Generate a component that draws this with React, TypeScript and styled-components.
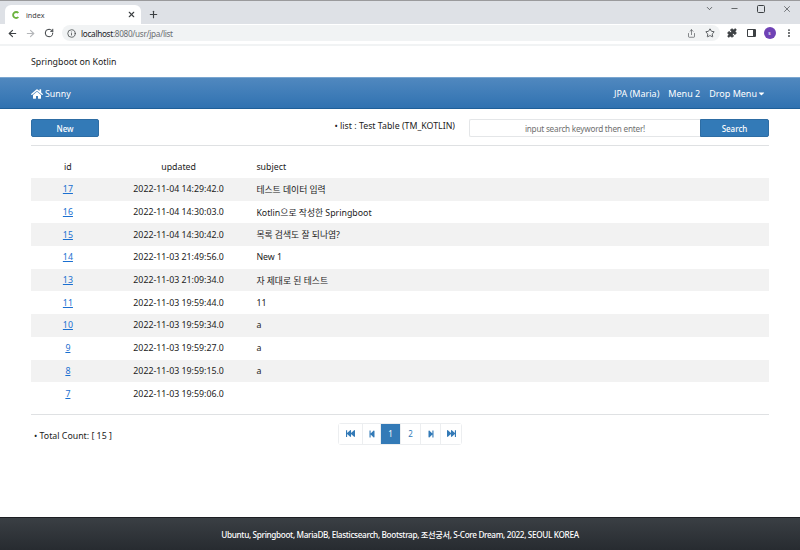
import React from 'react';
import styled, { createGlobalStyle } from 'styled-components';
import { FaHome, FaCaretDown, FaFastBackward, FaStepBackward, FaStepForward, FaFastForward } from 'react-icons/fa';
import { ArrowLeft, ArrowRight, RotateCw, Info, Share, Star, Puzzle, X, Plus, ChevronDown, Minus, EllipsisVertical } from 'lucide-react';

interface IRow {
    id: number;
    updated: string;
    subject: string;
}

const rows: IRow[] = [
    { id: 17, updated: '2022-11-04 14:29:42.0', subject: '테스트 데이터 입력' },
    { id: 16, updated: '2022-11-04 14:30:03.0', subject: 'Kotlin으로 작성한 Springboot' },
    { id: 15, updated: '2022-11-04 14:30:42.0', subject: '목록 검색도 잘 되나염?' },
    { id: 14, updated: '2022-11-03 21:49:56.0', subject: 'New 1' },
    { id: 13, updated: '2022-11-03 21:09:34.0', subject: '자 제대로 된 테스트' },
    { id: 11, updated: '2022-11-03 19:59:44.0', subject: '11' },
    { id: 10, updated: '2022-11-03 19:59:34.0', subject: 'a' },
    { id: 9, updated: '2022-11-03 19:59:27.0', subject: 'a' },
    { id: 8, updated: '2022-11-03 19:59:15.0', subject: 'a' },
    { id: 7, updated: '2022-11-03 19:59:06.0', subject: '' },
];

const GlobalStyle = createGlobalStyle`
    html, body {
        margin: 0;
        padding: 0;
        background: #fff;
    }
    * {
        box-sizing: border-box;
    }
`;

const Page = styled.div`
    width: 800px;
    height: 550px;
    overflow: hidden;
    display: flex;
    flex-direction: column;
    font-family: "Noto Sans", "Noto Sans CJK KR", sans-serif;
    font-size: 8.8px;
    color: #222;
`;

const TabStrip = styled.div`
    height: 24px;
    flex: none;
    display: flex;
    align-items: flex-end;
    background: #dee1e6;
    border-top: 1px solid #9a9a9c;
    padding-left: 5px;
`;

const Tab = styled.div`
    width: 136px;
    height: 19px;
    background: #fff;
    border-radius: 6px 6px 0 0;
    display: flex;
    align-items: center;
    padding: 0 5px 0 7px;
    font-size: 7.2px;
    color: #3c4043;
`;

const TabTitle = styled.span`
    margin-left: 6px;
    flex: 1;
`;

const NewTab = styled.div`
    width: 24px;
    height: 19px;
    display: flex;
    align-items: center;
    justify-content: center;
    color: #3c4043;
`;

const WindowControls = styled.div`
    margin-left: auto;
    align-self: flex-start;
    display: flex;
    align-items: center;
    height: 15px;
    padding-right: 8px;
    gap: 16.5px;
    color: #3c4043;
`;

const MaxBox = styled.div`
    width: 8px;
    height: 8px;
    border: 1px solid #3c4043;
    border-radius: 1.5px;
    margin: 0 1px;
`;

const ChromeBar = styled.div`
    height: 22px;
    flex: none;
    display: flex;
    align-items: center;
    padding: 0 6px 2px 3px;
    background: #fff;
    border-bottom: 2px solid #f1f3f4;
    color: #5f6368;
`;

const NavIcon = styled.div<{ $dim?: boolean }>`
    width: 18.5px;
    display: flex;
    justify-content: center;
    color: ${(p) => (p.$dim ? '#b4b6b9' : '#3c4043')};
`;

const Omnibox = styled.div`
    margin-left: 3.5px;
    width: 658px;
    height: 16px;
    border-radius: 8px;
    background: #f1f3f4;
    display: flex;
    align-items: center;
    padding: 0 5px;
    font-size: 8.2px;
    letter-spacing: -0.3px;
    color: #6b6e72;
`;

const Host = styled.span`
    color: #202124;
`;

const Url = styled.span`
    margin-left: 5px;
    flex: 1;
`;

const OmniIcons = styled.div`
    display: flex;
    align-items: center;
    gap: 9.5px;
    color: #3c4043;
`;

const ExtIcons = styled.div`
    display: flex;
    align-items: center;
    margin-left: 7px;
    gap: 8px;
    color: #3c4043;
`;

const SidePanel = styled.div`
    width: 9px;
    height: 8px;
    margin-left: 1.5px;
    border: 1px solid #3c4043;
    border-right-width: 3px;
    border-radius: 1px;
`;

const Avatar = styled.div`
    width: 12px;
    height: 12px;
    border-radius: 50%;
    background: #6f42b5;
    color: #fff;
    font-size: 5px;
    display: flex;
    align-items: center;
    justify-content: center;
`;

const Brand = styled.div`
    height: 31px;
    flex: none;
    padding: 8px 31px 0;
    line-height: 16px;
    color: #222;
`;

const NavBar = styled.nav`
    height: 32px;
    flex: none;
    display: flex;
    align-items: center;
    justify-content: space-between;
    padding: 0 31px;
    color: #fff;
    font-size: 9px;
    background: linear-gradient(to bottom, #5088bf 0%, #3072b1 100%);
    border-top: 1px solid #7aa6d0;
    border-bottom: 1px solid #1f5f98;
`;

const NavHome = styled.div`
    display: flex;
    align-items: center;
    gap: 2px;
    padding-top: 1px;
    font-size: 8.8px;
`;

const NavMenu = styled.div`
    display: flex;
    align-items: center;
    gap: 9px;
    padding-right: 3px;
`;

const NavDrop = styled.span`
    display: inline-flex;
    align-items: center;
`;

const Content = styled.main`
    padding: 10px 31px 0;
    flex: none;
`;

const Toolbar = styled.div`
    display: flex;
    align-items: center;
    height: 18px;
`;

const PrimaryButton = styled.button<{ $width: number }>`
    width: ${(p) => p.$width}px;
    height: 18px;
    padding: 0;
    background: #337ab7;
    color: #fff;
    border: 1px solid #2e6da4;
    font-family: inherit;
    font-size: 8px;
    font-weight: 500;
    border-radius: 2px;
`;

const ListTitle = styled.div`
    margin-left: auto;
    margin-right: 14px;
    position: relative;
    top: -2px;
`;

const SearchGroup = styled.div`
    display: flex;
    width: 300px;
`;

const SearchInput = styled.input`
    width: 231px;
    height: 18px;
    border: 1px solid #e4e6e8;
    border-right: none;
    border-radius: 2px 0 0 2px;
    padding: 0 6px;
    text-align: center;
    font-family: inherit;
    font-size: 8.2px;
    letter-spacing: -0.22px;
    &::placeholder {
        color: #6f6f6f;
        opacity: 1;
    }
`;

const SearchButton = styled(PrimaryButton)`
    border-radius: 0 2px 2px 0;
`;

const Rule = styled.hr<{ $top: number }>`
    margin: ${(p) => p.$top}px 0 0;
    border: none;
    border-top: 1px solid #dfe1e3;
    height: 0;
`;

const Table = styled.table`
    width: 100%;
    margin-top: 9px;
    border-collapse: collapse;
    table-layout: fixed;
`;

const HeadCell = styled.th<{ $width?: string; $left?: boolean }>`
    width: ${(p) => p.$width || 'auto'};
    height: 23px;
    padding: 0 4px;
    font-weight: 400;
    font-size: 8.8px;
    text-align: ${(p) => (p.$left ? 'left' : 'center')};
`;

const Row = styled.tr`
    height: 22.7px;
    &:nth-child(odd) {
        background: #f2f2f2;
    }
`;

const Cell = styled.td<{ $left?: boolean }>`
    padding: 0 4px;
    font-size: 8.8px;
    text-align: ${(p) => (p.$left ? 'left' : 'center')};
`;

const IdLink = styled.a`
    color: #1a6fd0;
    text-decoration: underline;
`;

const Bottom = styled.div`
    display: grid;
    grid-template-columns: 1fr auto 1fr;
    align-items: center;
    margin-top: 8px;
`;

const TotalCount = styled.div`
    padding: 4px 0 0 3px;
`;

const Pager = styled.div`
    display: flex;
    height: 22px;
    border: 1px solid #eceef0;
    border-radius: 3px;
`;

const PageCell = styled.div<{ $active?: boolean; $width: number }>`
    width: ${(p) => p.$width}px;
    display: flex;
    align-items: center;
    justify-content: center;
    font-size: 8px;
    color: ${(p) => (p.$active ? '#fff' : '#337ab7')};
    background: ${(p) => (p.$active ? '#337ab7' : '#fff')};
    border-left: 1px solid #eceef0;
    &:first-child {
        border-left: none;
    }
`;

const Footer = styled.footer`
    margin-top: auto;
    height: 33px;
    flex: none;
    display: flex;
    align-items: center;
    justify-content: center;
    color: #fff;
    font-size: 8.2px;
    letter-spacing: -0.34px;
    font-weight: 500;
    background: linear-gradient(to bottom, #3a3f44 0%, #272b30 100%);
    border-top: 1px solid #1c1e22;
`;

const SpringIcon = () => (
    <svg width="8" height="8" viewBox="0 0 12 12">
        <path d="M9.5 3 A4.5 4.5 0 1 0 9.5 9" fill="none" stroke="#6db33f" strokeWidth="2.8" />
    </svg>
);

const App = () => {
    return (
        <Page>
            <GlobalStyle />
            <TabStrip>
                <Tab>
                    <SpringIcon />
                    <TabTitle>index</TabTitle>
                    <X size={9} strokeWidth={3} color="#3c4043" />
                </Tab>
                <NewTab>
                    <Plus size={11} strokeWidth={2.5} />
                </NewTab>
                <WindowControls>
                    <ChevronDown size={9} strokeWidth={2} />
                    <Minus size={9} strokeWidth={2} />
                    <MaxBox />
                    <X size={10} strokeWidth={1.6} />
                </WindowControls>
            </TabStrip>
            <ChromeBar>
                <NavIcon><ArrowLeft size={11} strokeWidth={2.4} /></NavIcon>
                <NavIcon $dim><ArrowRight size={11} strokeWidth={2.4} /></NavIcon>
                <NavIcon><RotateCw size={10} strokeWidth={2.4} /></NavIcon>
                <Omnibox>
                    <Info size={9} strokeWidth={2} color="#3c4043" />
                    <Url><Host>localhost</Host>:8080/usr/jpa/list</Url>
                    <OmniIcons>
                        <Share size={9} strokeWidth={1.6} />
                        <Star size={10} strokeWidth={2} />
                    </OmniIcons>
                </Omnibox>
                <ExtIcons>
                    <Puzzle size={10} fill="#3c4043" />
                    <SidePanel />
                    <Avatar>s</Avatar>
                    <EllipsisVertical size={10} strokeWidth={2.6} />
                </ExtIcons>
            </ChromeBar>
            <Brand>Springboot on Kotlin</Brand>
            <NavBar>
                <NavHome><FaHome size={12} />Sunny</NavHome>
                <NavMenu>
                    <span>JPA (Maria)</span>
                    <span>Menu 2</span>
                    <NavDrop>Drop Menu<FaCaretDown size={9} /></NavDrop>
                </NavMenu>
            </NavBar>
            <Content>
                <Toolbar>
                    <PrimaryButton $width={68}>New</PrimaryButton>
                    <ListTitle>• list : Test Table (TM_KOTLIN)</ListTitle>
                    <SearchGroup>
                        <SearchInput placeholder="input search keyword then enter!" />
                        <SearchButton $width={69}>Search</SearchButton>
                    </SearchGroup>
                </Toolbar>
                <Rule $top={8} />
                <Table>
                    <thead>
                        <tr>
                            <HeadCell $width="10%">id</HeadCell>
                            <HeadCell $width="20%">updated</HeadCell>
                            <HeadCell $left>subject</HeadCell>
                        </tr>
                    </thead>
                    <tbody>
                        {rows.map((each) => (
                            <Row key={each.id}>
                                <Cell><IdLink href="#">{each.id}</IdLink></Cell>
                                <Cell>{each.updated}</Cell>
                                <Cell $left>{each.subject}</Cell>
                            </Row>
                        ))}
                    </tbody>
                </Table>
                <Rule $top={9} />
                <Bottom>
                    <TotalCount>• Total Count: [ 15 ]</TotalCount>
                    <Pager>
                        <PageCell $width={23}><FaFastBackward size={9} /></PageCell>
                        <PageCell $width={18}><FaStepBackward size={8} /></PageCell>
                        <PageCell $width={20} $active>1</PageCell>
                        <PageCell $width={20}>2</PageCell>
                        <PageCell $width={20}><FaStepForward size={8} /></PageCell>
                        <PageCell $width={21}><FaFastForward size={9} /></PageCell>
                    </Pager>
                </Bottom>
            </Content>
            <Footer>Ubuntu, Springboot, MariaDB, Elasticsearch, Bootstrap, 조선궁서, S-Core Dream, 2022, SEOUL KOREA</Footer>
        </Page>
    );
};

export default App;
